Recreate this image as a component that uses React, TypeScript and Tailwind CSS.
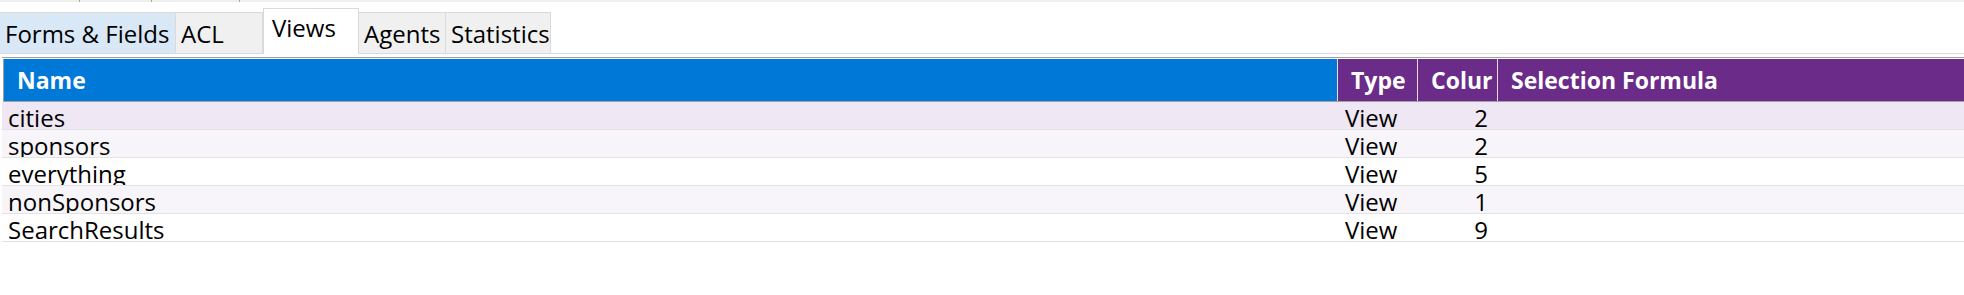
import React from "react";

const tabs = [
  { label: "Forms & Fields", width: "w-[176px]", state: "hover" },
  { label: "ACL", width: "w-[87px]", state: "idle" },
  { label: "Views", width: "w-[96px]", state: "active" },
  { label: "Agents", width: "w-[87px]", state: "idle" },
  { label: "Statistics", width: "w-[105px]", state: "idle" },
];

const views = [
  { name: "cities", type: "View", columns: 2 },
  { name: "sponsors", type: "View", columns: 2 },
  { name: "everything", type: "View", columns: 5 },
  { name: "nonSponsors", type: "View", columns: 1 },
  { name: "SearchResults", type: "View", columns: 9 },
];

const rowBg = ["bg-[#efe7f4]", "bg-[#f8f5fa]", "bg-white", "bg-[#f8f5fa]", "bg-white"];

export default function App() {
  return (
    <div className="w-[1964px] h-[295px] bg-white overflow-hidden text-black font-['Open_Sans','Noto_Sans',sans-serif]">
      {/* clipped strip from the pane above */}
      <div className="h-[2px] bg-[#efefef] flex">
        <span className="ml-[79px] w-px h-[2px] bg-[#b8a58a]" />
        <span className="ml-[71px] w-px h-[2px] bg-[#b8a58a]" />
        <span className="ml-[87px] w-px h-[2px] bg-[#b8a58a]" />
      </div>

      {/* Tabs */}
      <div className="mt-[6px] h-[46px] flex items-end border-b border-[#dadada]">
        {tabs.map((tab) =>
          tab.state === "active" ? (
            <div
              key={tab.label}
              className={`${tab.width} h-[46px] -mb-px bg-white border border-b-0 border-[#dadada] pl-[8px] pt-[4px] text-[24px] leading-[30px] whitespace-nowrap overflow-hidden`}
            >
              {tab.label}
            </div>
          ) : (
            <div
              key={tab.label}
              className={`${tab.width} h-[41px] border-t border-r border-[#dadada] pl-[5px] pt-[6px] text-[24px] leading-[30px] whitespace-nowrap overflow-hidden ${
                tab.state === "hover" ? "bg-[#d9e8f7]" : "bg-[#f0f0f0]"
              }`}
            >
              {tab.label}
            </div>
          )
        )}
      </div>

      {/* Table */}
      <div className="mt-[3px] ml-[2px] border-t border-[#a0a0a0] pt-px">
        <div className="ml-px h-[43px] flex border-l border-b border-[#a0a0a0] text-white font-bold text-[23px] leading-none">
          <div className="w-[1333px] bg-[#0078d7] flex items-center pl-[13px]">Name</div>
          <div className="w-[80px] bg-[#6a2c88] border-l border-[#e6dcec] flex items-center pl-[13px] overflow-hidden whitespace-nowrap">
            Type
          </div>
          <div className="w-[80px] bg-[#6a2c88] border-l border-[#e6dcec] flex items-center pl-[13px] overflow-hidden whitespace-nowrap">
            Colur
          </div>
          <div className="flex-1 bg-[#6a2c88] border-l border-[#e6dcec] flex items-center pl-[13px] whitespace-nowrap">
            Selection Formula
          </div>
        </div>

        {views.map((v, i) => (
          <div
            key={v.name}
            className={`h-[28px] flex border-b border-[#e3e3e3] text-[24px] leading-none overflow-hidden ${rowBg[i]}`}
          >
            <div className="w-[1336px] h-[27px] pl-[6px] pt-[4px] whitespace-nowrap overflow-hidden">{v.name}</div>
            <div className="w-[80px] h-[27px] pl-[7px] pt-[4px] overflow-hidden">{v.type}</div>
            <div className="w-[80px] h-[27px] pr-[10px] pt-[4px] text-right overflow-hidden">{v.columns}</div>
            <div className="flex-1" />
          </div>
        ))}
      </div>
    </div>
  );
}
